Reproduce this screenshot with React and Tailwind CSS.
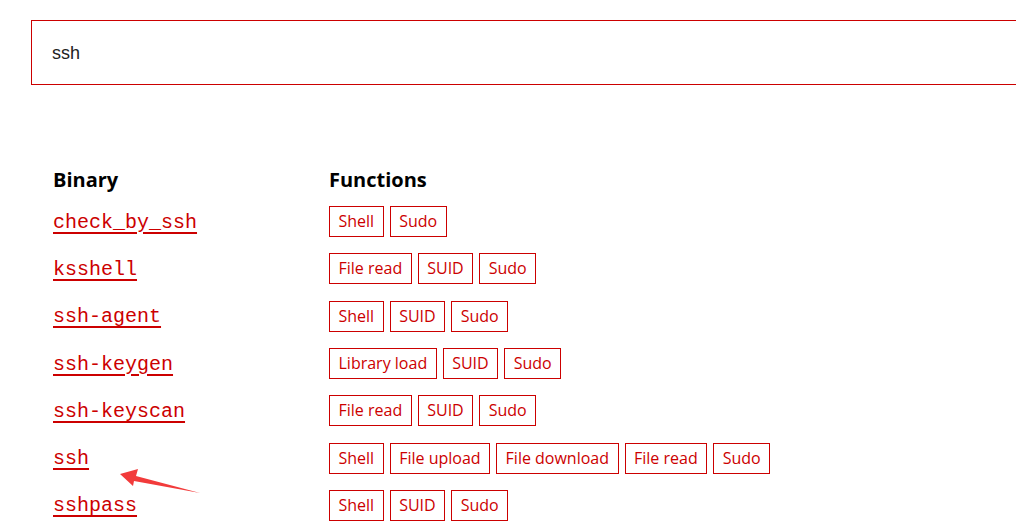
const rows = [
  { name: 'check_by_ssh', fns: ['Shell', 'Sudo'] },
  { name: 'ksshell', fns: ['File read', 'SUID', 'Sudo'] },
  { name: 'ssh-agent', fns: ['Shell', 'SUID', 'Sudo'] },
  { name: 'ssh-keygen', fns: ['Library load', 'SUID', 'Sudo'] },
  { name: 'ssh-keyscan', fns: ['File read', 'SUID', 'Sudo'] },
  { name: 'ssh', fns: ['Shell', 'File upload', 'File download', 'File read', 'Sudo'] },
  { name: 'sshpass', fns: ['Shell', 'SUID', 'Sudo'] },
]

function Arrow() {
  return (
    <svg className="absolute left-[110px] top-[462px]" width="100" height="40" viewBox="110 462 100 40">
      <polygon points="120,474 138,469 136,476 200,493 134,481 133,486" fill="#f23b3b" />
    </svg>
  )
}

export default function App() {
  return (
    <div className="relative w-[1016px] h-[524px] overflow-hidden bg-white font-['Open_Sans',sans-serif]">
      <div className="pt-5 pl-[31px]">
        <div className="w-[1020px] h-[65px] border border-[#c00] flex items-center pl-5">
          <span className="text-[18px] text-[#222] font-['Liberation_Sans',Arial,sans-serif] mt-[2px]">ssh</span>
        </div>
      </div>

      <div className="pl-[53px] mt-[80px]">
        <div className="grid grid-cols-[276px_1fr] h-7 items-center">
          <div className="text-[20px] font-bold text-black">Binary</div>
          <div className="text-[20px] font-bold text-black">Functions</div>
        </div>
        <div className="mt-[5px]">
          {rows.map((row) => (
            <div key={row.name} className="grid grid-cols-[276px_1fr] h-[47.3px] items-center">
              <a href="#" className="text-[20px] text-[#c00] underline decoration-2 decoration-[#c00] underline-offset-[4px] font-['Liberation_Mono',monospace] w-fit mt-[2px]">
                {row.name}
              </a>
              <div className="flex gap-[6px]">
                {row.fns.map((fn) => (
                  <span key={fn} className="border border-[#c00] text-[#c00] text-[16px] leading-[21px] py-1 px-[8.5px]">
                    {fn}
                  </span>
                ))}
              </div>
            </div>
          ))}
        </div>
      </div>
      <Arrow />
    </div>
  )
}
